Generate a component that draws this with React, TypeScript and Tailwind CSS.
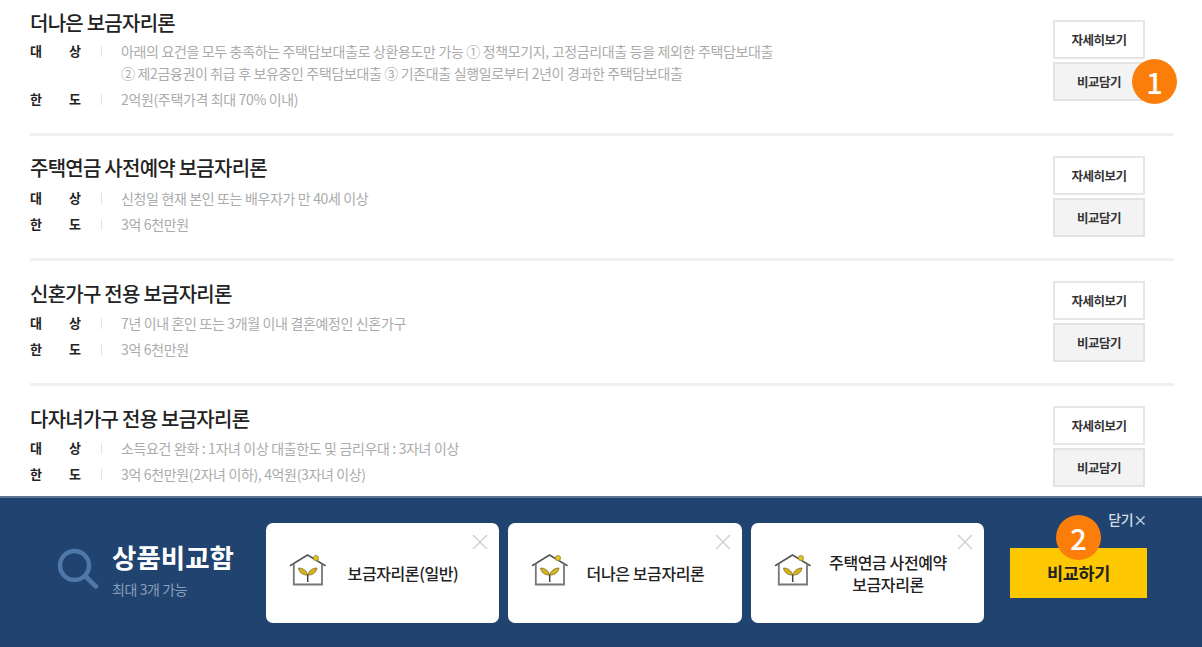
import React from "react";

const font = "font-['Noto_Sans_CJK_KR','Noto_Sans',sans-serif]";

function Row({ title, target, target2, limit, pt, h, line = true, gap, mtop, titleTop = "" }: { title: string; target: string; target2?: string; limit: string; pt: string; h: string; line?: boolean; gap: string; mtop: string; titleTop?: string }) {
  return (
    <div className={`ml-[30px] mr-[28px] flex justify-between ${h} ${pt} ${line ? "border-b-[3px] border-[#f0f0f0]" : ""}`}>
      <div className="flex flex-col">
        <div className={`h-[24px] text-[20px] leading-[24px] font-medium tracking-[-0.75px] text-[#222] ${titleTop}`}>{title}</div>
        <div className={`flex text-[14px] leading-[22px] ${gap}`}>
          <div className="flex w-[51px] shrink-0 justify-between text-[13px] font-bold text-[#222]"><span>대</span><span>상</span></div>
          <div className="mr-[19px] ml-[20px] mt-[6px] h-[11px] w-px shrink-0 bg-[#e2e2e2]" />
          <div className="tracking-[-0.35px] text-[#ababab]">
            <div>{target}</div>
            {target2 && <div>{target2}</div>}
          </div>
        </div>
        <div className="mt-[4px] flex text-[14px] leading-[22px]">
          <div className="flex w-[51px] shrink-0 justify-between text-[13px] font-bold text-[#222]"><span>한</span><span>도</span></div>
          <div className="mr-[19px] ml-[20px] mt-[6px] h-[11px] w-px shrink-0 bg-[#e2e2e2]" />
          <div className="tracking-[-0.35px] text-[#ababab]">{limit}</div>
        </div>
      </div>
      <div className={`mr-[29px] flex w-[92px] flex-col gap-[3px] ${mtop}`}>
        <div className="flex h-[39px] items-center justify-center border-2 border-[#e6e6e6] bg-white pt-[1px] text-[12.5px] font-bold tracking-[-0.5px] text-[#333]">자세히보기</div>
        <div className="flex h-[39px] items-center justify-center border-2 border-[#e3e3e3] bg-[#f3f3f3] pt-[1px] text-[12.5px] font-bold tracking-[-0.5px] text-[#333]">비교담기</div>
      </div>
    </div>
  );
}

function HouseIcon() {
  return (
    <svg width="38" height="34" viewBox="0 0 38 34" fill="none" className="mb-[6px] shrink-0">
      <path d="M1.5 12.5 L18.5 2 L36 12.5" stroke="#555" strokeWidth="1.5" strokeLinejoin="round" strokeLinecap="round" />
      <path d="M4.8 10.5 V31.5 H33 V10.5" stroke="#777" strokeWidth="1.8" />
      <circle cx="27" cy="5" r="2.6" fill="#e2c21f" stroke="#8f8440" strokeWidth="0.7" />
      <path d="M18.7 29 V21" stroke="#444" strokeWidth="1.5" />
      <path d="M18.7 22 C17.5 17.5 14 15 9.5 15 C10 19 13.5 22.5 18.7 22 Z" fill="#d8b21c" stroke="#5c5220" strokeWidth="0.6" />
      <path d="M18.7 22 C20 17.5 23.5 15 28 15 C27.5 19 24 22.5 18.7 22 Z" fill="#d8b21c" stroke="#5c5220" strokeWidth="0.6" />
    </svg>
  );
}

function Card({ lines, width }: { lines: string[]; width: string }) {
  return (
    <div className={`relative flex h-[100px] items-center rounded-[7px] bg-white pr-[20px] pl-[23px] ${width}`}>
      <HouseIcon />
      <div className="flex-1 text-center text-[16px] leading-[22px] font-medium tracking-[-0.4px] text-[#222]">
        {lines.map((l) => <div key={l}>{l}</div>)}
      </div>
      <svg width="16" height="16" viewBox="0 0 16 16" className="absolute top-[11px] right-[11px]">
        <path d="M1 1 L15 15 M15 1 L1 15" stroke="#d2d2d2" strokeWidth="1.5" />
      </svg>
    </div>
  );
}

function Badge({ n, className }: { n: string; className: string }) {
  return (
    <div className={`absolute flex h-[45px] w-[45px] items-center justify-center rounded-full bg-[#fb7e0a] text-[29px] font-medium text-white ${className}`}>{n}</div>
  );
}

export default function App() {
  return (
    <div className={`relative flex h-[647px] w-[1202px] flex-col overflow-hidden bg-white ${font}`}>
      <div className="flex-1 overflow-hidden">
        <Row title="더나은 보금자리론" target="아래의 요건을 모두 충족하는 주택담보대출로 상환용도만 가능 ① 정책모기지, 고정금리대출 등을 제외한 주택담보대출" target2="② 제2금융권이 취급 후 보유중인 주택담보대출 ③ 기존대출 실행일로부터 2년이 경과한 주택담보대출" limit="2억원(주택가격 최대 70% 이내)" pt="pt-[11px]" h="h-[136px]" gap="mt-[5px]" mtop="mt-[9px]" />
        <Row title="주택연금 사전예약 보금자리론" target="신청일 현재 본인 또는 배우자가 만 40세 이상" limit="3억 6천만원" pt="pt-[20px]" h="h-[125px]" gap="mt-[7px]" mtop="mt-0" />
        <Row title="신혼가구 전용 보금자리론" target="7년 이내 혼인 또는 3개월 이내 결혼예정인 신혼가구" limit="3억 6천만원" pt="pt-[20px]" h="h-[125px]" gap="mt-[6px]" titleTop="mt-[1px]" mtop="mt-0" />
        <Row title="다자녀가구 전용 보금자리론" target="소득요건 완화 : 1자녀 이상 대출한도 및 금리우대 : 3자녀 이상" limit="3억 6천만원(2자녀 이하), 4억원(3자녀 이상)" pt="pt-[20px]" h="h-[110px]" line={false} gap="mt-[6px]" titleTop="mt-[1px]" mtop="mt-0" />
      </div>
      <div className="flex h-[151px] items-start border-t-2 border-[#5d7691] bg-[#20436f] pt-[25px]">
        <div className="ml-[57px] flex h-[100px] w-[209px] items-center">
          <svg width="42" height="42" viewBox="0 0 42 42" fill="none" className="mb-[8px] shrink-0">
            <circle cx="17.5" cy="17.5" r="14.5" stroke="#4f78a8" strokeWidth="4.5" />
            <path d="M28 28 L39 38.5" stroke="#4f78a8" strokeWidth="4.5" strokeLinecap="round" />
          </svg>
          <div className="mb-[8px] ml-[13px]">
            <div className="text-[26.5px] leading-[32px] font-bold text-white">상품비교함</div>
            <div className="mt-[8px] text-[14px] leading-[16px] tracking-[-0.4px] text-[#8ba0b8]">최대 3개 가능</div>
          </div>
        </div>
        <div className="flex gap-[9px]">
          <Card lines={["보금자리론(일반)"]} width="w-[233px]" />
          <Card lines={["더나은 보금자리론"]} width="w-[234px]" />
          <Card lines={["주택연금 사전예약", "보금자리론"]} width="w-[233px]" />
        </div>
        <div className="relative ml-[26px] h-[100px] w-[137px]">
          <div className="absolute top-[-13px] right-0 text-[14px] leading-[18px] font-medium tracking-[-0.3px] text-[#d5dde6]">닫기×</div>
          <div className="mt-[25px] flex h-[50px] items-center justify-center bg-[#fdc800] text-[17.5px] font-bold tracking-[-0.3px] text-[#222]">비교하기</div>
        </div>
      </div>
      <Badge n="1" className="top-[59px] left-[1132px]" />
      <Badge n="2" className="top-[515px] left-[1056px]" />
    </div>
  );
}
